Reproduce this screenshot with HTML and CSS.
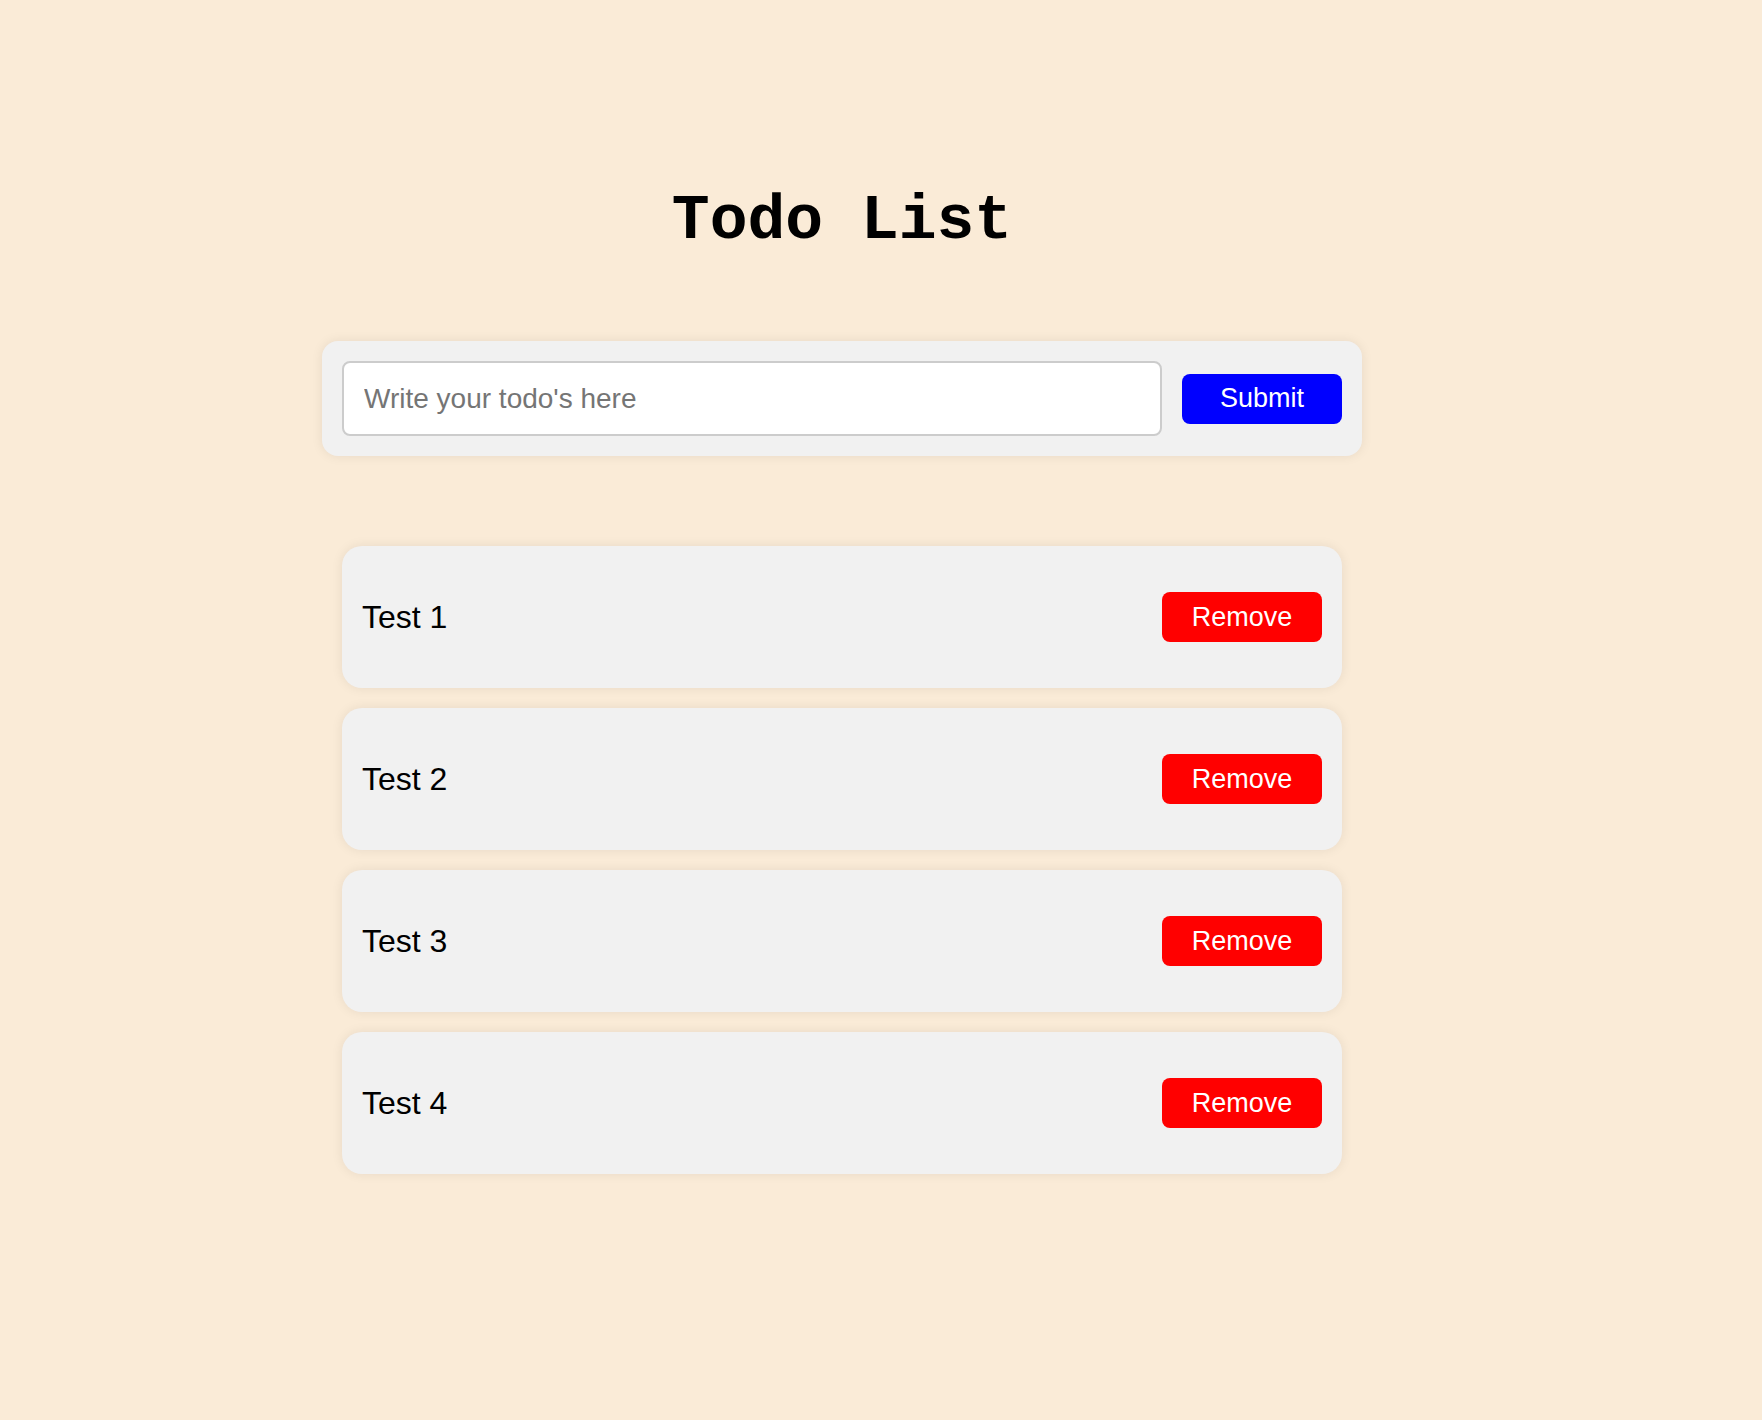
FILE: index.html
```html
<!DOCTYPE html>
<html lang="en">
<head>
<meta charset="utf-8">
<title>Todo List</title>
<link rel="stylesheet" href="styles.css">
</head>
<body>
<main class="app">
  <h1 class="title">Todo List</h1>
  <form class="todo-form">
    <input class="todo-input" type="text" placeholder="Write your todo's here">
    <button class="btn btn-submit" type="button">Submit</button>
  </form>
  <ul class="todo-list">
    <li class="todo-item"><span class="todo-text">Test 1</span><button class="btn btn-remove" type="button">Remove</button></li>
    <li class="todo-item"><span class="todo-text">Test 2</span><button class="btn btn-remove" type="button">Remove</button></li>
    <li class="todo-item"><span class="todo-text">Test 3</span><button class="btn btn-remove" type="button">Remove</button></li>
    <li class="todo-item"><span class="todo-text">Test 4</span><button class="btn btn-remove" type="button">Remove</button></li>
  </ul>
</main>
</body>
</html>
```

FILE: styles.css
```css
html, body {
  margin: 0;
  padding: 0;
  background: #faebd7;
  min-height: 100%;
}
body {
  font-family: "Liberation Sans", Arial, sans-serif;
  color: #000;
  min-height: 1420px;
}
.app {
  width: 1684px;
  display: flex;
  flex-direction: column;
  align-items: center;
  padding-top: 187px;
}
.title {
  margin: 0;
  font-family: "Liberation Mono", "Courier New", monospace;
  font-weight: bold;
  font-size: 63px;
  line-height: 70px;
}
.todo-form {
  margin-top: 84px;
  width: 1040px;
  box-sizing: border-box;
  padding: 20px;
  display: flex;
  align-items: center;
  gap: 20px;
  background: #f1f1f1;
  border-radius: 16px;
  box-shadow: 0 0 12px rgba(0, 0, 0, 0.08);
}
.todo-input {
  width: 820px;
  height: 75px;
  box-sizing: border-box;
  border: 2px solid #cccccc;
  border-radius: 8px;
  padding: 0 20px;
  font-family: "Liberation Sans", Arial, sans-serif;
  font-size: 28px;
  background: #fff;
  color: #000;
  outline: none;
}
.todo-input::placeholder {
  color: #757575;
}
.btn {
  width: 160px;
  height: 50px;
  border: none;
  border-radius: 8px;
  color: #fff;
  font-family: "Liberation Sans", Arial, sans-serif;
  font-size: 27px;
  padding: 0;
  cursor: pointer;
}
.btn-submit {
  background: #0000ff;
}
.btn-remove {
  background: #ff0000;
}
.todo-list {
  list-style: none;
  margin: 90px 0 0;
  padding: 0;
  display: flex;
  flex-direction: column;
  gap: 20px;
}
.todo-item {
  width: 1000px;
  height: 142px;
  box-sizing: border-box;
  padding: 0 20px;
  display: flex;
  align-items: center;
  justify-content: space-between;
  background: #f1f1f1;
  border-radius: 20px;
  box-shadow: 0 0 12px rgba(0, 0, 0, 0.08);
}
.todo-text {
  font-size: 32px;
}
```
